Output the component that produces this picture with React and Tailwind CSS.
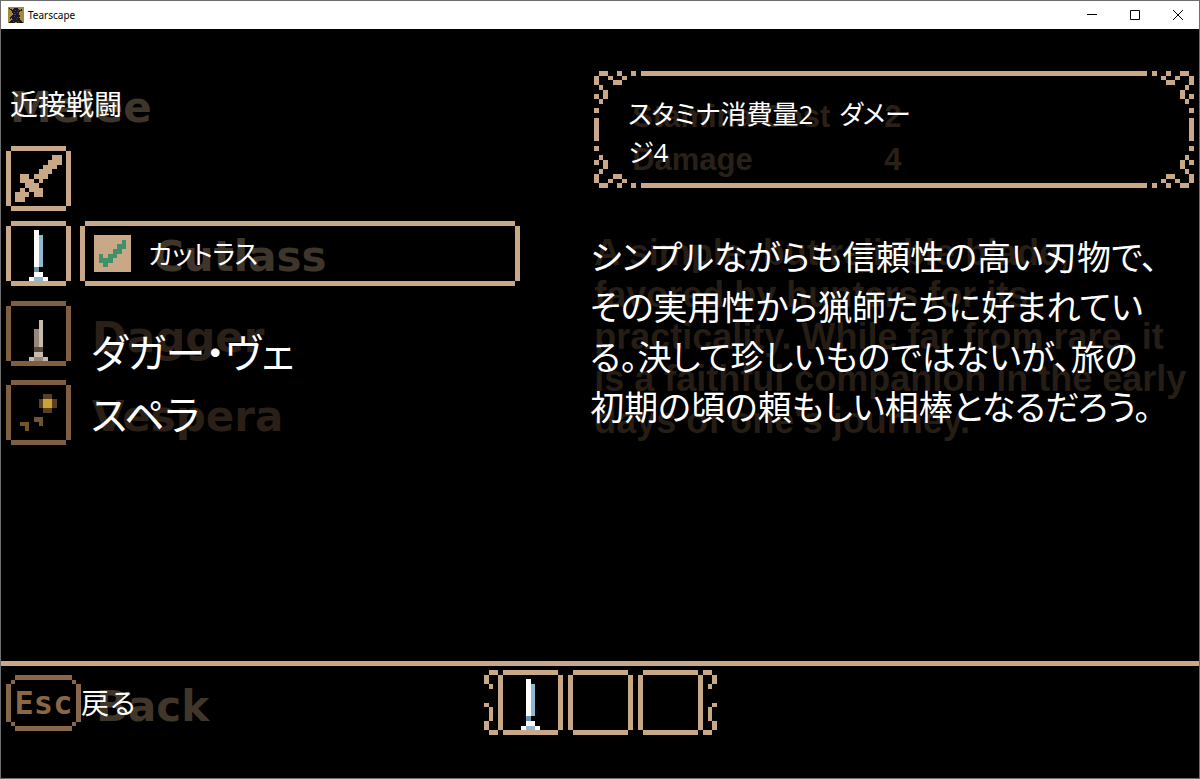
import React from 'react';
import clsx from 'clsx';

const TAN = { '#': '#c8a886' };

const SWORD_ICON = [
  '..............',
  '..............',
  '..........##..',
  '.........###..',
  '........###...',
  '.......###....',
  '...##.###.....',
  '...###.#......',
  '....###.......',
  '...#.###......',
  '..###.##......',
  '..##..........',
  '..............',
  '..............',
];

const CUTLASS = [
  '..............',
  '..............',
  '......w.......',
  '......wb......',
  '......wb......',
  '......wb......',
  '......wb......',
  '......wb......',
  '......wb......',
  '......wb......',
  '......d.......',
  '......ww......',
  '.....wbbw.....',
  '..............',
];
const CUTLASS_COLORS = { w: '#ffffff', b: '#8fb8d0', d: '#6b94ac' };

const DAGGER = [
  '..............',
  '..............',
  '..............',
  '..............',
  '.......w......',
  '.......w......',
  '......bw......',
  '......bw......',
  '......bw......',
  '......bw......',
  '......dd......',
  '......ww......',
  '.....wbbw.....',
  '..............',
];
const DAGGER_COLORS = { w: '#c9bbab', b: '#95877a', d: '#574a3e' };

const VESPERA = [
  '..............',
  '..............',
  '..............',
  '........oo....',
  '.......oyyo...',
  '.......oyyo...',
  '........oo....',
  '..............',
  '......pp......',
  '...pp..p......',
  '....p.........',
  '..............',
  '..............',
  '..............',
];
const VESPERA_COLORS = { y: '#cda235', o: '#5a4020', p: '#74532d' };

const CHECK = [
  '........',
  '......g.',
  '.....gg.',
  '....gg..',
  '.g.gg...',
  '.ggg....',
  '..g.....',
  '........',
];

const CORNER = [
  '.##..#..#',
  '#..#..#..',
  '#...##...',
  '.#.......',
  '..#......',
  '#.#......',
  '.#.......',
  '.........',
  '#........',
];

const BRACKET = [
  '.##',
  '#..',
  '#..',
  '.#.',
  '...',
  '...',
  '...',
  '#..',
  '.#.',
  '.#.',
  '.#.',
  '#..',
  '#..',
  '.##',
];

const KEYCAP = [
  '..############..',
  '.#............#.',
  '#..............#',
  '#..............#',
  '#..............#',
  '#..............#',
  '#..............#',
  '#..............#',
  '#..............#',
  '#..............#',
  '.#............#.',
  '..############..',
];

const APP_ICON = [
  'yyyyyyyyyyyyyyyy',
  'ykyyyykkkkyyyyyy',
  'yykkykkkkkkyykyy',
  'yyykkkknkknkkkyy',
  'yyyykkkkkkkkyyyy',
  'yyyykknkknkyyyyy',
  'yyyyykkkkkkyyyyy',
  'yyyyyknnkkkyyyyy',
  'yyyykkkkkkkkyyyy',
  'yyykkknkkkkkyyyy',
  'yykkkkkkknkyyyyy',
  'yykykkkkkkkkyyyy',
  'yyyynkkknkkkyyyy',
  'yyykkkkkkkkkkyyy',
  'yykkknkkkknkkkyy',
  'ykkkkkkyykkkkkky',
];
const APP_COLORS = { y: '#a18a3c', k: '#1d1720', n: '#4b4260' };

// Draws a sprite, one square for each character of the map
function Sprite({ map, colors = TAN, className }) {
  return (
    <svg
      viewBox={`0 0 ${map[0].length} ${map.length}`}
      preserveAspectRatio="none"
      shapeRendering="crispEdges"
      className={clsx('block shrink-0', className)}
      aria-hidden="true"
    >
      {map.map((row, y) =>
        [...row].map((c, x) =>
          c === '.' ? null : <rect key={`${x}-${y}`} x={x} y={y} width="1" height="1" fill={colors[c]} />
        )
      )}
    </svg>
  );
}

// Box with notched corners
const Frame = ({ as: Tag = 'div', dim, className, children, ...rest }) => (
  <Tag
    className={clsx(
      'relative block h-[65px]',
      "before:pointer-events-none before:absolute before:inset-x-[5px] before:inset-y-0 before:border-y-[5px] before:content-['']",
      "after:pointer-events-none after:absolute after:inset-x-0 after:inset-y-[5px] after:border-x-[5px] after:content-['']",
      dim ? 'before:border-[#805f41] after:border-[#805f41]' : 'before:border-[#c8a886] after:border-[#c8a886]',
      className
    )}
    {...rest}
  >
    {children}
  </Tag>
);

// Original label that shows through behind the translated one
const Ghost = ({ className, children }) => (
  <span
    className={clsx(
      "pointer-events-none absolute font-['DejaVu_Sans'] text-[42px] leading-[42px] font-bold whitespace-nowrap",
      className
    )}
    aria-hidden="true"
  >
    {children}
  </span>
);

const TitleBar = () => (
  <header className="flex h-7 items-center bg-white text-black">
    <Sprite map={APP_ICON} colors={APP_COLORS} className="ml-[7px] size-4" />
    <h1 className="ml-1 flex-1 font-['Noto_Sans',sans-serif] text-[10px] leading-4">Tearscape</h1>
    <button type="button" aria-label="Minimize" className="flex h-7 w-[43px] items-center justify-center">
      <svg viewBox="0 0 10 10" className="size-[10px]"><path d="M0 4.5h10" stroke="#000" /></svg>
    </button>
    <button type="button" aria-label="Maximize" className="flex h-7 w-[43px] items-center justify-center">
      <svg viewBox="0 0 10 10" className="size-[10px]"><path d="M.5.5h9v9h-9z" fill="none" stroke="#000" /></svg>
    </button>
    <button type="button" aria-label="Close" className="flex h-7 w-[43px] items-center justify-center">
      <svg viewBox="0 0 10 10" className="size-[10px]"><path d="M0 0l10 10M10 0L0 10" stroke="#000" /></svg>
    </button>
  </header>
);

const WeaponList = () => (
  <section>
    <div className="relative mt-[13px] mb-[22px]">
      <Ghost className="top-[3px] left-1 text-[#3f362b]">Melee</Ghost>
      <h2 className="relative pl-1 text-[28px] leading-10">近接戦闘</h2>
    </div>
    <div className="flex gap-[9px]">
      <div className="flex w-[65px] shrink-0 flex-col">
        <Frame as="button" type="button" aria-label="近接戦闘">
          <Sprite map={SWORD_ICON} className="size-[65px]" />
        </Frame>
        <Frame as="button" type="button" aria-label="カットラス" className="mt-[10px]">
          <Sprite map={CUTLASS} colors={CUTLASS_COLORS} className="size-[65px]" />
        </Frame>
        <Frame as="button" type="button" aria-label="ダガー" dim className="mt-[15px]">
          <Sprite map={DAGGER} colors={DAGGER_COLORS} className="size-[65px]" />
        </Frame>
        <Frame as="button" type="button" aria-label="ヴェスペラ" dim className="mt-[14px]">
          <Sprite map={VESPERA} colors={VESPERA_COLORS} className="size-[65px]" />
        </Frame>
      </div>

      <div className="flex-1 pt-[75px]">
        <Frame as="label" className="flex items-center pl-[14px]">
          <span className="relative size-[37px]">
            <input type="checkbox" defaultChecked className="block size-[37px] appearance-none bg-[#c8a886]" />
            <Sprite map={CHECK} colors={{ g: '#41906a' }} className="pointer-events-none absolute inset-0 size-[37px]" />
          </span>
          <Ghost className="top-[15px] left-[73px] text-[#3f362b]">Cutlass</Ghost>
          <span className="relative ml-[17px] text-[26px] leading-10">カットラス</span>
        </Frame>
        <div className="relative pt-[36px] pl-[11px]">
          <Ghost className="top-[31px] left-[12px] text-[#2a2018]">Dagger</Ghost>
          <Ghost className="top-[110px] left-[12px] text-[#2a2018]">Vespera</Ghost>
          <p className="relative text-[40px] leading-[62px]">
            ダガー・ヴェ
            <br />
            スペラ
          </p>
        </div>
      </div>
    </div>
  </section>
);

const Details = () => (
  <section>
    <div className="relative min-h-[117px] pt-[24px] pl-[34px]">
      <Sprite map={CORNER} className="absolute top-0 left-0 size-[42px]" />
      <Sprite map={CORNER} className="absolute top-0 right-0 size-[42px] -scale-x-100" />
      <Sprite map={CORNER} className="absolute bottom-0 left-0 size-[42px] -scale-y-100" />
      <Sprite map={CORNER} className="absolute right-0 bottom-0 size-[42px] -scale-100" />
      <span className="absolute inset-x-[47px] inset-y-0 border-y-[5px] border-[#c8a886]" />
      <span className="absolute inset-x-0 inset-y-[47px] border-x-[5px] border-[#c8a886]" />

      <div
        className="absolute top-[24px] left-[38px] grid grid-cols-[252px_auto] font-['Liberation_Sans'] text-[31px] leading-[43px] font-bold text-[#2a2017]"
        aria-hidden="true"
      >
        <span>Stamina Cost</span>
        <span>2</span>
        <span>Damage</span>
        <span>4</span>
      </div>
      <p className="relative text-[26px] leading-[38px]">
        スタミナ消費量2　ダメー
        <br />
        ジ4
      </p>
    </div>

    <div className="relative mt-[44px] -ml-1">
      <p
        className="absolute top-0 left-1 font-['Liberation_Sans'] text-[36px] leading-[42px] font-bold whitespace-nowrap text-[#261d14]"
        aria-hidden="true"
      >
        A simple, but reliable blade,
        <br />
        favored by hunters for its
        <br />
        practicality. While far from rare, it
        <br />
        is a faithful companion in the early
        <br />
        days of one's journey.
      </p>
      <p className="relative text-[34px] leading-[50px] whitespace-nowrap">
        シンプルながらも信頼性の高い刃物で、
        <br />
        その実用性から猟師たちに好まれてい
        <br />
        る。決して珍しいものではないが、旅の
        <br />
        初期の頃の頼もしい相棒となるだろう。
      </p>
    </div>
  </section>
);

const BottomBar = () => (
  <footer className="grid min-h-[117px] grid-cols-[1fr_auto_1fr] items-start border-t-[5px] border-[#c8a886] px-[5px] pt-1">
    <button type="button" className="relative mt-[5px] flex w-fit items-center">
      <span className="relative flex h-14 w-[75px] items-center justify-center">
        <Sprite map={KEYCAP} colors={{ '#': '#86674a' }} className="absolute inset-0 h-14 w-[75px]" />
        <kbd className="font-['DejaVu_Sans_Mono',monospace] text-[32px] leading-10 font-bold text-[#8a6844]">Esc</kbd>
      </span>
      <Ghost className="top-[11px] left-[90px] text-[#40372a]">Back</Ghost>
      <span className="relative text-[28px] leading-10">戻る</span>
    </button>

    <div className="flex">
      <Sprite map={BRACKET} className="h-[65px] w-[14px]" />
      <div className="flex gap-[5px]">
        <Frame as="button" type="button" aria-label="スロット1" className="w-[65px]">
          <Sprite map={CUTLASS} colors={CUTLASS_COLORS} className="size-[65px]" />
        </Frame>
        <Frame as="button" type="button" aria-label="スロット2" className="w-[65px]" />
        <Frame as="button" type="button" aria-label="スロット3" className="w-[65px]" />
      </div>
      <Sprite map={BRACKET} className="h-[65px] w-[14px] -scale-x-100" />
    </div>
  </footer>
);

export default function App() {
  return (
    <div className="flex min-h-screen flex-col border border-[#6e6e6e] bg-black font-['Open_Sans','Noto_Sans_CJK_JP',sans-serif] text-white" lang="ja">
      <TitleBar />
      <main className="grid flex-1 grid-cols-[6fr_7fr] content-start gap-[74px] px-[5px] pt-[42px] [font-feature-settings:'palt']">
        <WeaponList />
        <Details />
      </main>
      <BottomBar />
    </div>
  );
}
